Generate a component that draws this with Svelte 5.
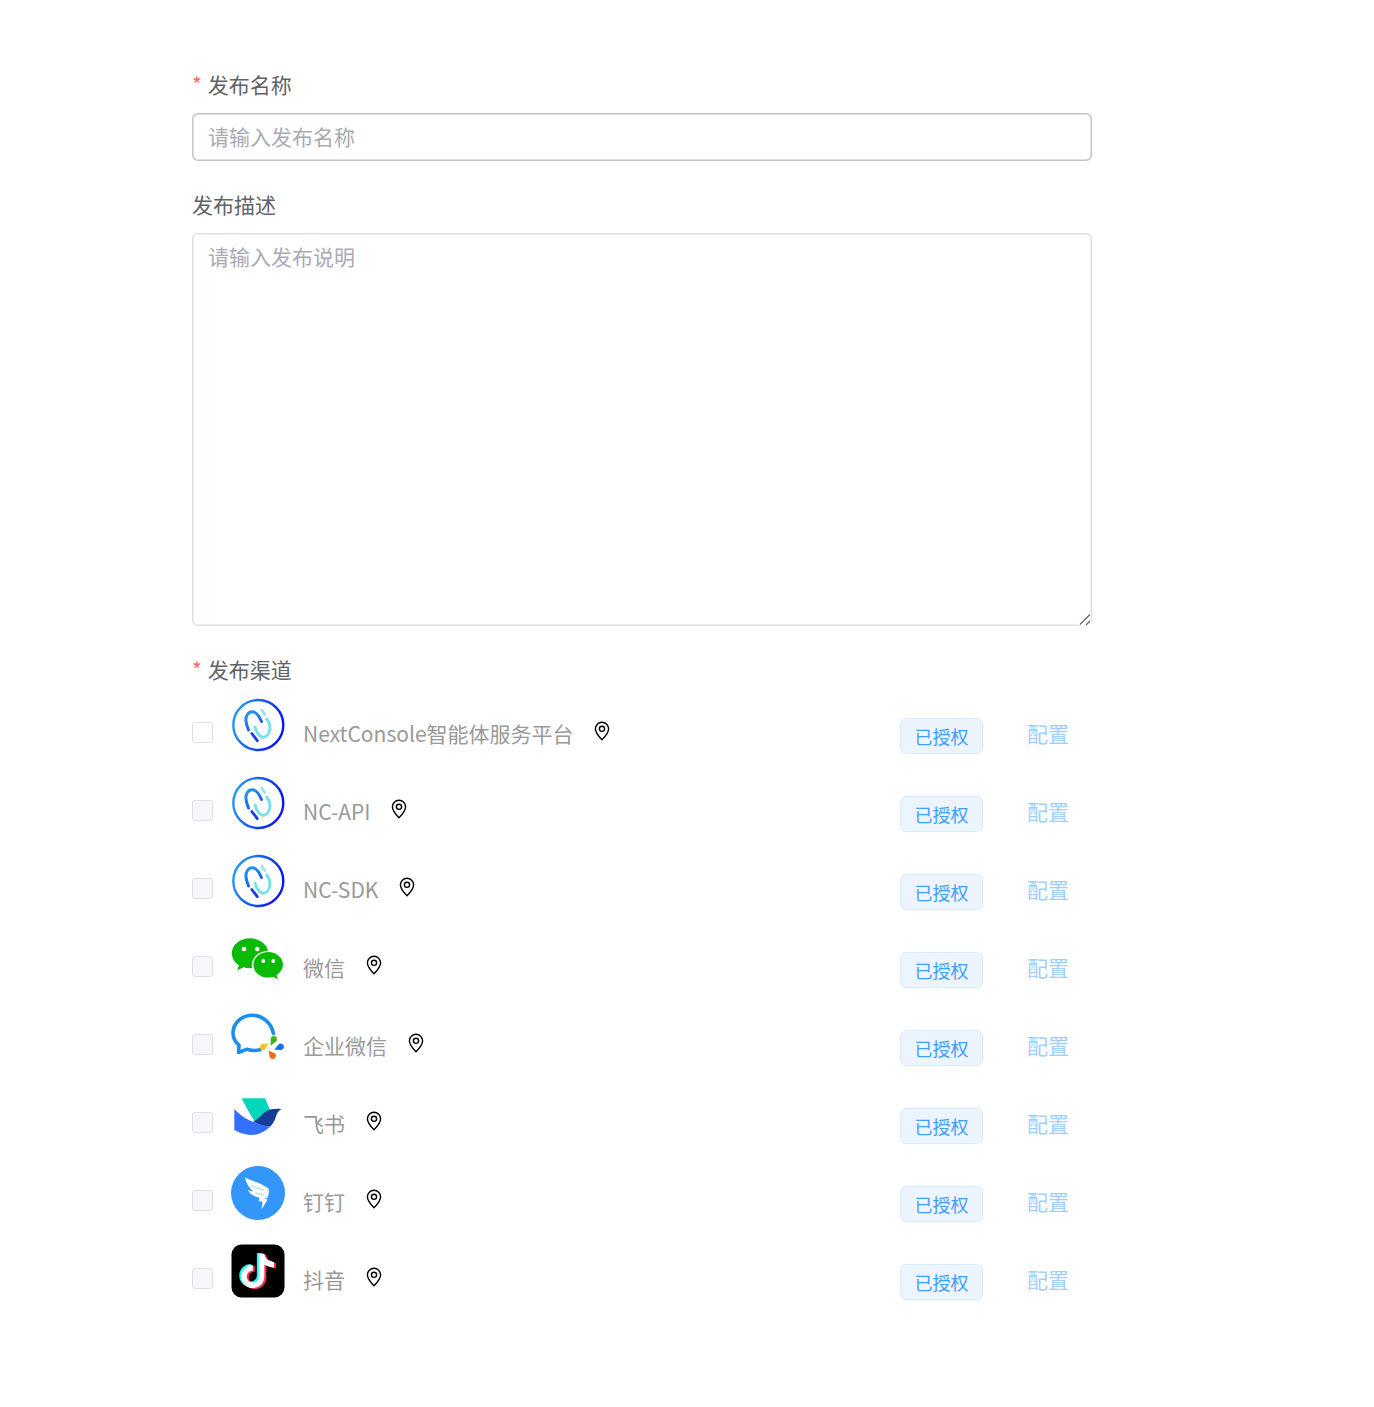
<script>
	const channels = [
		{ name: 'NextConsole智能体服务平台', icon: 'nc', checked: true },
		{ name: 'NC-API', icon: 'nc' },
		{ name: 'NC-SDK', icon: 'nc' },
		{ name: '微信', icon: 'wechat' },
		{ name: '企业微信', icon: 'wecom' },
		{ name: '飞书', icon: 'feishu' },
		{ name: '钉钉', icon: 'dingtalk' },
		{ name: '抖音', icon: 'douyin' }
	];
</script>

{#snippet logo(icon)}
	<svg class="logo" viewBox="0 0 54 54" fill="none">
		{#if icon === 'nc'}
			<defs>
				<linearGradient id="ring" x1="0" y1="0" x2="1" y2="0.3">
					<stop offset="0" stop-color="#2aa8f2" />
					<stop offset="1" stop-color="#0818f0" />
				</linearGradient>
				<linearGradient id="link" x1="0" y1="0" x2="0.6" y2="1">
					<stop offset="0" stop-color="#1e9cf2" />
					<stop offset="1" stop-color="#1a5ae8" />
				</linearGradient>
			</defs>
			<circle cx="27.3" cy="27" r="25" stroke="url(#ring)" stroke-width="2.4" />
			<path d="M30.5 23.5C28 18 25 13.7 21.5 13.7C17 13.7 14.5 18 15 23C15.3 26.5 16.5 29.5 17.5 32" stroke="url(#link)" stroke-width="3" stroke-linecap="round" />
			<path d="M20.8 35.5L26.3 42.7" stroke="#1a3ce4" stroke-width="2.8" stroke-linecap="round" />
			<path d="M30.7 12L33.8 16.5" stroke="#8ce8ee" stroke-width="2.6" stroke-linecap="round" />
			<path d="M35.8 21C38 24 39.2 27 39 30.5C38.6 35.5 35.5 39.5 32 39.3C28 39 25.5 34 24 29.3" stroke="#78e2e8" stroke-width="3" stroke-linecap="round" />
		{:else if icon === 'wechat'}
			<path d="M19 6.3C8.8 6.3.8 13 .8 21.3C.8 26.3 3.6 30.5 8 33.3L6 38.5L12.5 35.3C14.5 35.9 16.7 36.3 19 36.3C29.2 36.3 37.3 29.6 37.3 21.3C37.3 13 29.2 6.3 19 6.3Z" fill="#09bb07" />
			<ellipse cx="37.2" cy="33" rx="16.4" ry="14" fill="#fff" />
			<path d="M37.2 20C29 20 22.4 25.6 22.4 32.8C22.4 40 29 45.6 37.2 45.6C39 45.6 40.7 45.3 42.2 44.8L47 47.5L45.6 43.2C49.4 40.7 52 37 52 32.8C52 25.6 45.4 20 37.2 20Z" fill="#09bb07" />
			<circle cx="13" cy="17" r="2.3" fill="#fff" />
			<circle cx="26.3" cy="17" r="2.3" fill="#fff" />
			<circle cx="32.3" cy="29" r="1.9" fill="#fff" />
			<circle cx="42.3" cy="29" r="1.9" fill="#fff" />
		{:else if icon === 'wecom'}
			<path d="M42.4 23.5C40.5 13.5 32 5.3 21.5 5.3C10 5.3 2 13.5 2 23C2 28 4.5 32.2 8 35.2L7.5 42.5L15.5 39.3C19.5 40.5 24.5 40.8 29 39.8" stroke="#1b8ff0" stroke-width="3.6" stroke-linejoin="round" stroke-linecap="round" />
			<path d="M39.6 35.8L39.7 30A3.2 3.2 0 1 1 45.3 31.2Z" fill="#3fb51a" />
			<path d="M43.3 39.8L47.7 34.3A3.2 3.2 0 1 1 49.4 40Z" fill="#1670e8" />
			<path d="M37.6 40.7L43.2 43A3.2 3.2 0 1 1 38.5 45.8Z" fill="#f26a1b" />
			<path d="M37.5 33.5L33.9 39.6A3.2 3.2 0 1 1 31.2 33.9Z" fill="#fbc21c" />
		{:else if icon === 'feishu'}
			<path d="M10.7 10.3H34L39 22L24 33.7C19 27 14.5 18 10.7 10.3Z" fill="#00d6b9" />
			<path d="M22.3 33.7C28 31 32 24 39 21.5C43 20.5 47 20.5 50.7 21C47.5 22.5 46 25 44.8 29C43.5 33 41.5 36.5 39 38.7C33 38.5 27 36.5 22.3 33.7Z" fill="#163c9a" />
			<path d="M3.3 21C9 27 16 32 22.3 33.7C28 36.5 33 38.2 39 38.7C33 44.5 26 47.5 19 47C13 46.5 8 44.5 3.3 42Z" fill="#3370ff" />
		{:else if icon === 'dingtalk'}
			<circle cx="27" cy="27" r="27" fill="#3296fa" />
			<path d="M14 11.5C20 14.5 32 18 37.3 22.3C38.5 25.5 37.8 29 36.3 32L33.5 32L36.5 33.5L30.5 43.5L31.6 35.8L27.5 35L28.6 31.8C23.5 31 18.5 28 16.8 23.8C18.5 24.8 20.3 25.3 22 25.4C18 22 15 17 14 11.5Z" fill="#fff" />
			<path d="M20.5 19.5C24.5 22 29 23.5 33 24M24.5 26.5C27 28 30 28.8 33 29" stroke="#9ccbfb" stroke-width="0.9" />
		{:else}
			<rect x="0.5" y="0.5" width="53" height="53" rx="10" fill="#000" />
			<g stroke-width="5.5">
				<path d="M28.6 9V31.5A8.8 8.8 0 1 1 19.8 22.7M28.6 9C29 15 33.9 19.5 40.9 19.8" stroke="#25f4ee" />
				<path d="M32.6 11V33.5A8.8 8.8 0 1 1 23.8 24.7M32.6 11C33 17 37.9 21.5 44.9 21.8" stroke="#fe2c55" />
				<path d="M30.6 10V32.5A8.8 8.8 0 1 1 21.8 23.7M30.6 10C31 16 35.9 20.5 42.9 20.8" stroke="#fff" />
			</g>
		{/if}
	</svg>
{/snippet}

<main class="page">
	<form class="form">
		<div class="item">
			<div class="label"><span class="star">*</span>发布名称</div>
			<input class="name-input" placeholder="请输入发布名称" />
		</div>
		<div class="item">
			<div class="label">发布描述</div>
			<div class="desc-wrap">
				<textarea class="desc" placeholder="请输入发布说明"></textarea>
				<svg class="grip" viewBox="0 0 12 13" fill="none" stroke="#666" stroke-width="1.3">
					<path d="M1 11.5L11 1.5M7 12L11 8" />
				</svg>
			</div>
		</div>
		<div class="item">
			<div class="label"><span class="star">*</span>发布渠道</div>
			<div class="channels">
				{#each channels as c (c.name)}
					<div class="row">
						<span class="check" class:enabled={c.checked}></span>
						{@render logo(c.icon)}
						<span class="name">{c.name}</span>
						<svg class="pin" viewBox="0 0 16 20" fill="none" stroke="#000" stroke-width="1.4">
							<path d="M8 18.8C5 15.8 1.4 12.2 1.4 7.8A6.6 6.6 0 0 1 14.6 7.8C14.6 12.2 11 15.8 8 18.8Z" stroke-linejoin="round" />
							<circle cx="8" cy="7.8" r="2.6" />
						</svg>
						<span class="tag">已授权</span>
						<span class="config">配置</span>
					</div>
				{/each}
			</div>
		</div>
	</form>
</main>

<style>
	:global(body) {
		margin: 0;
		background: #fff;
	}

	.page {
		min-height: 1407px;
		box-sizing: border-box;
		padding: 61px 0 0 192px;
		font-family: 'Noto Sans CJK SC', 'Noto Sans', sans-serif;
		font-size: 21px;
	}

	.form {
		width: 900px;
	}

	.item {
		margin-bottom: 20px;
	}

	.label {
		height: 52px;
		line-height: 46px;
		color: #606266;
	}

	.star {
		color: #f56c6c;
		margin-right: 6px;
	}

	input,
	textarea {
		display: block;
		width: 100%;
		box-sizing: border-box;
		font: inherit;
		color: #606266;
		outline: none;
		background: #fff;
		border: none;
		margin: 0;
	}

	input::placeholder,
	textarea::placeholder {
		color: #a8abb2;
		opacity: 1;
	}

	.name-input {
		height: 48px;
		padding: 0 16px 2px;
		box-shadow: inset 0 0 0 1.5px #c0c4cc;
		border-radius: 6px;
	}

	.desc-wrap {
		position: relative;
	}

	.desc {
		height: 393px;
		padding: 8px 16px;
		line-height: 31.5px;
		box-shadow: inset 0 0 0 1.5px #dcdfe6;
		border-radius: 6px;
		resize: none;
	}

	.grip {
		position: absolute;
		right: 1px;
		bottom: 0;
		width: 12px;
		height: 13px;
		background: #fff;
	}

	.row {
		display: flex;
		align-items: flex-start;
		height: 78px;
		position: relative;
	}

	.check {
		width: 21px;
		height: 21px;
		box-sizing: border-box;
		border: 1px solid #dcdfe6;
		border-radius: 3px;
		background: #f5f7fa;
		margin: 24px 18px 0 0;
		flex: none;
	}

	.check.enabled {
		background: #fff;
	}

	.logo {
		width: 54px;
		height: 54px;
		flex: none;
		margin-right: 18px;
	}

	.name {
		line-height: 32px;
		margin-top: 19px;
		color: #999;
		white-space: nowrap;
	}

	.pin {
		width: 16px;
		height: 20px;
		margin: 23px 0 0 20.5px;
		flex: none;
	}

	.tag {
		margin-left: auto;
		margin-top: 20px;
		width: 83px;
		height: 36px;
		box-sizing: border-box;
		text-align: center;
		line-height: 34px;
		font-size: 18px;
		color: #409eff;
		background: #ecf5ff;
		border: 1px solid #d9ecff;
		border-radius: 6px;
		flex: none;
	}

	.config {
		margin: 19px 23px 0 44px;
		line-height: 32px;
		color: #a0cfff;
		flex: none;
	}
</style>
